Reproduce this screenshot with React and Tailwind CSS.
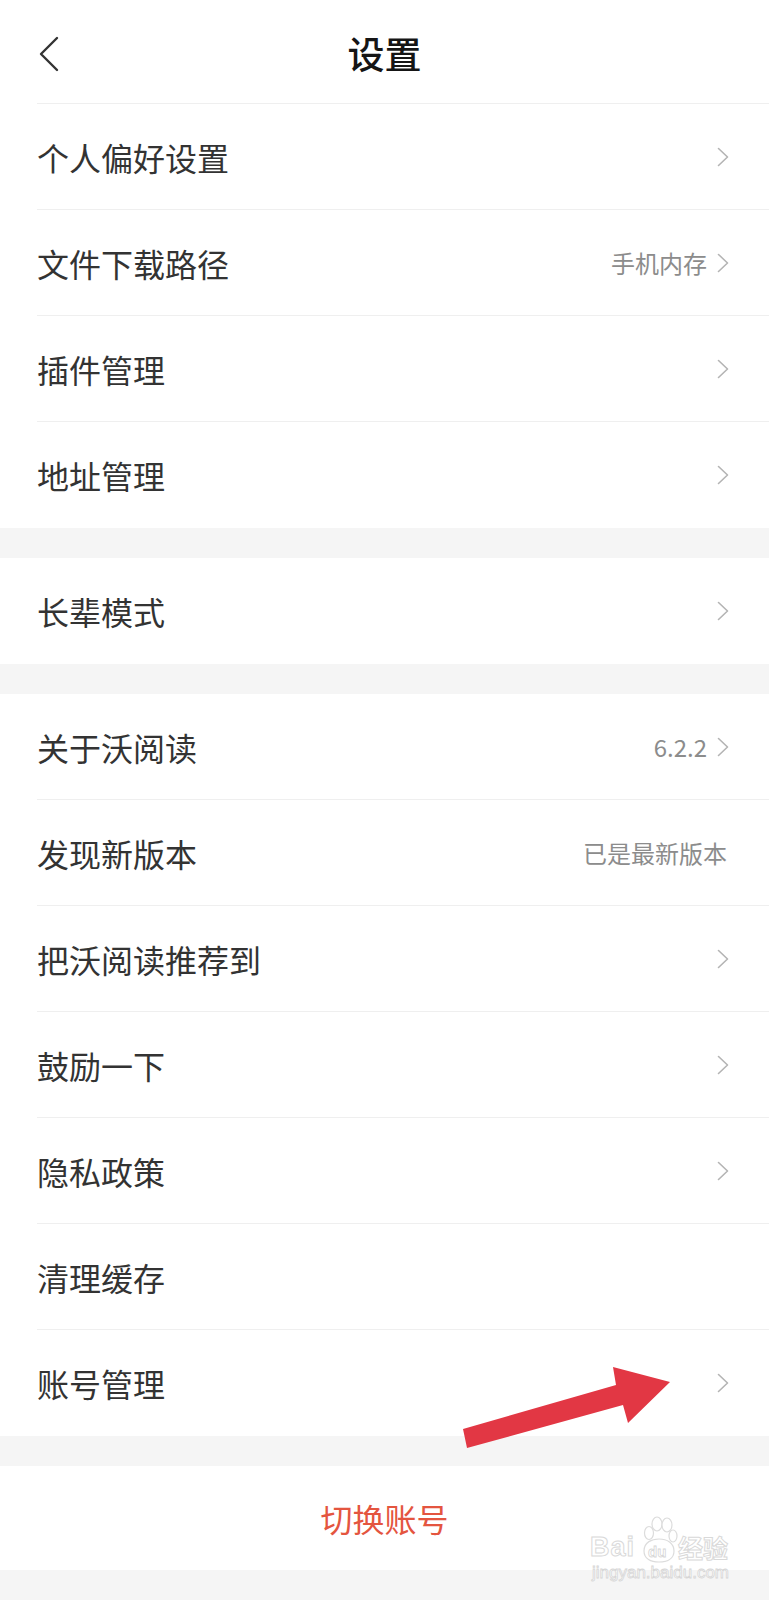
import React from "react";

const sections = [
  [
    { label: "个人偏好设置", arrow: true },
    { label: "文件下载路径", value: "手机内存", arrow: true },
    { label: "插件管理", arrow: true },
    { label: "地址管理", arrow: true },
  ],
  [{ label: "长辈模式", arrow: true }],
  [
    { label: "关于沃阅读", value: "6.2.2", arrow: true },
    { label: "发现新版本", value: "已是最新版本" },
    { label: "把沃阅读推荐到", arrow: true },
    { label: "鼓励一下", arrow: true },
    { label: "隐私政策", arrow: true },
    { label: "清理缓存" },
    { label: "账号管理", arrow: true },
  ],
];

function Chevron() {
  return (
    <svg width="12" height="20" viewBox="0 0 12 20" fill="none" className="shrink-0">
      <path d="M1.5 1.5 L10.5 10 L1.5 18.5" stroke="#b4b4b4" strokeWidth="1.6" strokeLinecap="round" strokeLinejoin="round" />
    </svg>
  );
}

function Row({ item, last }) {
  return (
    <div className="pl-[37px] bg-white">
      <div
        className={`flex items-center h-[106px] ${item.arrow ? "pr-[40px]" : "pr-[42px]"} ${
          last ? "" : "border-b border-[#efefef]"
        }`}
      >
        <span className="flex-1 text-[32px] leading-none text-[#333333]">{item.label}</span>
        {item.value && (
          <span className={`text-[24px] leading-none text-[#8c8c8c] ${item.arrow ? "mr-[10px]" : ""}`}>
            {item.value}
          </span>
        )}
        {item.arrow && <Chevron />}
      </div>
    </div>
  );
}

// baidu jingyan watermark, drawn over the bottom-right corner
function Watermark() {
  return (
    <div className="absolute left-[590px] top-[1516px] w-[142px] h-[68px] pointer-events-none select-none">
      <span className="absolute left-0 top-[18px] text-[27px] leading-none font-bold tracking-[1px] text-white [-webkit-text-stroke:1px_#d9d9d9] font-['Liberation_Sans',sans-serif]">
        Bai
      </span>
      <svg
        className="absolute left-[50px] top-0"
        width="38"
        height="48"
        viewBox="0 0 38 48"
        fill="white"
        stroke="#dcdcdc"
        strokeWidth="1.2"
      >
        <ellipse cx="9" cy="17" rx="4.5" ry="6.5" />
        <ellipse cx="17" cy="8" rx="5" ry="7" />
        <ellipse cx="27" cy="9" rx="5" ry="7" />
        <ellipse cx="33" cy="20" rx="4" ry="6" />
        <path d="M4 35 C4 26 12 23 19 23 C27 23 34 27 34 35 C34 43 27 46 19 46 C11 46 4 43 4 35 Z" />
        <text x="8" y="41" fontSize="15" fontWeight="700" fill="white" stroke="#d6d6d6" strokeWidth="0.8" fontFamily="Liberation Sans, sans-serif">
          du
        </text>
      </svg>
      <span className="absolute left-[88px] top-[19px] text-[25px] leading-none font-bold text-white [-webkit-text-stroke:1px_#d9d9d9] font-['Noto_Sans_CJK_SC',sans-serif]">
        经验
      </span>
      <span className="absolute left-[2px] top-[48px] text-[17px] leading-none text-white [-webkit-text-stroke:0.8px_#d6d6d6] font-['Liberation_Sans',sans-serif] whitespace-nowrap">
        jingyan.baidu.com
      </span>
    </div>
  );
}

export default function App() {
  return (
    <div className="relative w-full min-h-[1600px] bg-[#f5f5f5] font-['Noto_Sans_CJK_SC','Noto_Sans',sans-serif]">
      <div className="bg-white pl-[37px]">
        <div className="grid grid-cols-[1fr_auto_1fr] items-center h-[104px] pt-[4px] border-b border-[#efefef]">
          <div>
            <svg width="22" height="36" viewBox="0 0 22 36" fill="none" className="ml-[1px]">
              <path d="M19 2 L3 18 L19 34" stroke="#333333" strokeWidth="2.4" strokeLinecap="round" strokeLinejoin="round" />
            </svg>
          </div>
          <h1 className="text-[37px] leading-none font-medium text-[#151515] -ml-[37px]">设置</h1>
          <div />
        </div>
      </div>

      {sections.map((rows, si) => (
        <div key={si} className={si > 0 ? "mt-[30px]" : ""}>
          {rows.map((item, i) => (
            <Row key={item.label} item={item} last={i === rows.length - 1} />
          ))}
        </div>
      ))}

      <div className="mt-[30px] h-[104px] bg-white flex items-center justify-center">
        <span className="text-[32px] leading-none text-[#e4553f]">切换账号</span>
      </div>

      {/* red annotation arrow */}
      <svg className="absolute left-[440px] top-[1340px]" width="300" height="130" viewBox="0 0 300 130">
        <polygon points="23,89 176,45 173,27 230,42 188,83 183,65 27,108" fill="#e23744" />
      </svg>

      <Watermark />
    </div>
  );
}
